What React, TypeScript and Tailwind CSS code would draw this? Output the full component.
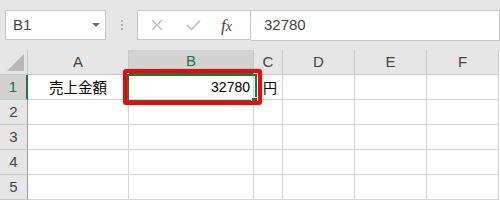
import React from "react";

const cols = [
  { k: "A", w: 101 },
  { k: "B", w: 125 },
  { k: "C", w: 29 },
  { k: "D", w: 72 },
  { k: "E", w: 72 },
  { k: "F", w: 72 },
];

export default function App() {
  const rows = [1, 2, 3, 4, 5];
  return (
    <div className="relative w-[500px] h-[200px] overflow-hidden bg-[#e6e6e6] font-['Liberation_Sans','Noto_Sans_CJK_JP',sans-serif]">
      {/* Top bar */}
      <div className="flex h-[50px] items-start pt-[10px] pl-[5px]">
        <div className="flex h-[30px] w-[101px] items-center justify-between border border-[#c6c6c6] bg-white pl-[7px] pr-[5px] text-[15px] text-[#444]">
          <span>B1</span>
          <svg width="8" height="4" viewBox="0 0 8 4" className="mb-[1px]">
            <path d="M0 0 H8 L4 4 Z" fill="#6e6e6e" />
          </svg>
        </div>
        <div className="flex w-[31px] h-[30px] flex-col items-center justify-center gap-[2px]">
          <div className="h-[2px] w-[2px] bg-[#b0b0b0]" />
          <div className="h-[2px] w-[2px] bg-[#b0b0b0]" />
          <div className="h-[2px] w-[2px] bg-[#b0b0b0]" />
        </div>
        <div className="flex h-[30px] w-[114px] items-center border border-[#c6c6c6] bg-white">
          <svg width="12" height="12" viewBox="0 0 12 12" className="ml-[13px]">
            <path d="M1 1 L11 11 M11 1 L1 11" stroke="#bdbdbd" strokeWidth="1.4" />
          </svg>
          <svg width="15" height="12" viewBox="0 0 15 12" className="ml-[23px]">
            <path d="M1 6 L5.5 10.5 L14 1.5" stroke="#bdbdbd" strokeWidth="1.6" fill="none" />
          </svg>
          <span className="ml-[20px] font-['Liberation_Serif',serif] italic text-[17px] leading-none text-[#444]">
            f<span className="text-[14px]">x</span>
          </span>
        </div>
        <div className="flex h-[31px] flex-1 items-center border border-l-0 border-[#c6c6c6] bg-white pl-[13px] text-[15px] text-[#444]">
          32780
        </div>
      </div>

      {/* Grid */}
      <div className="grid grid-cols-[28px_101px_125px_29px_72px_72px_72px] grid-rows-[25px_25px_25px_25px_25px_25px] bg-white">
        {/* Corner */}
        <div className="relative bg-[#e6e6e6] border-r border-b border-[#c8c8c8]">
          <svg width="18" height="18" viewBox="0 0 18 18" className="absolute left-[7px] top-[4px]">
            <path d="M17 0 V17 H0 Z" fill="#b8b8b8" />
          </svg>
        </div>
        {cols.map((c) => (
          <div
            key={c.k}
            className={
              c.k === "B"
                ? "flex items-center justify-center bg-[#d2d2d2] border-r border-[#c8c8c8] border-b-2 border-b-[#217346] text-[15px] text-[#217346]"
                : "flex items-center justify-center bg-[#e6e6e6] border-r border-b border-[#c8c8c8] text-[15px] text-[#444]"
            }
          >
            {c.k}
          </div>
        ))}
        {rows.map((r) => (
          <React.Fragment key={r}>
            <div
              className={
                r === 1
                  ? "flex items-center justify-center bg-[#d2d2d2] border-b border-[#c8c8c8] border-r-2 border-r-[#217346] text-[15px] text-[#217346]"
                  : "flex items-center justify-center bg-[#e6e6e6] border-b border-[#c8c8c8] border-r border-r-[#9e9e9e] text-[15px] text-[#444]"
              }
            >
              {r}
            </div>
            {cols.map((c) => (
              <div
                key={c.k}
                className="flex items-center border-r border-b border-[#d4d4d4] text-[15px] text-black"
              >
                {r === 1 && c.k === "A" && (
                  <span className="w-full text-center font-['Noto_Sans_CJK_JP',sans-serif] text-[14.5px] leading-none">売上金額</span>
                )}
                {r === 1 && c.k === "B" && (
                  <span className="w-full pr-[3px] text-right text-[14px] leading-none">32780</span>
                )}
                {r === 1 && c.k === "C" && (
                  <span className="pl-[9px] font-['Noto_Sans_CJK_JP',sans-serif] text-[14px] leading-none">円</span>
                )}
              </div>
            ))}
          </React.Fragment>
        ))}
      </div>

      {/* Selection outline */}
      <div className="absolute left-[127px] top-[74px] h-[28px] w-[130px] border-2 border-[#217346]" />
      <div className="absolute left-[251px] top-[97px] h-[7px] w-[7px] border border-white bg-[#217346]" />
      {/* Red annotation */}
      <div className="absolute left-[123px] top-[69px] h-[36px] w-[139px] rounded-[3px] border-4 border-[#ff0000]" />
    </div>
  );
}
